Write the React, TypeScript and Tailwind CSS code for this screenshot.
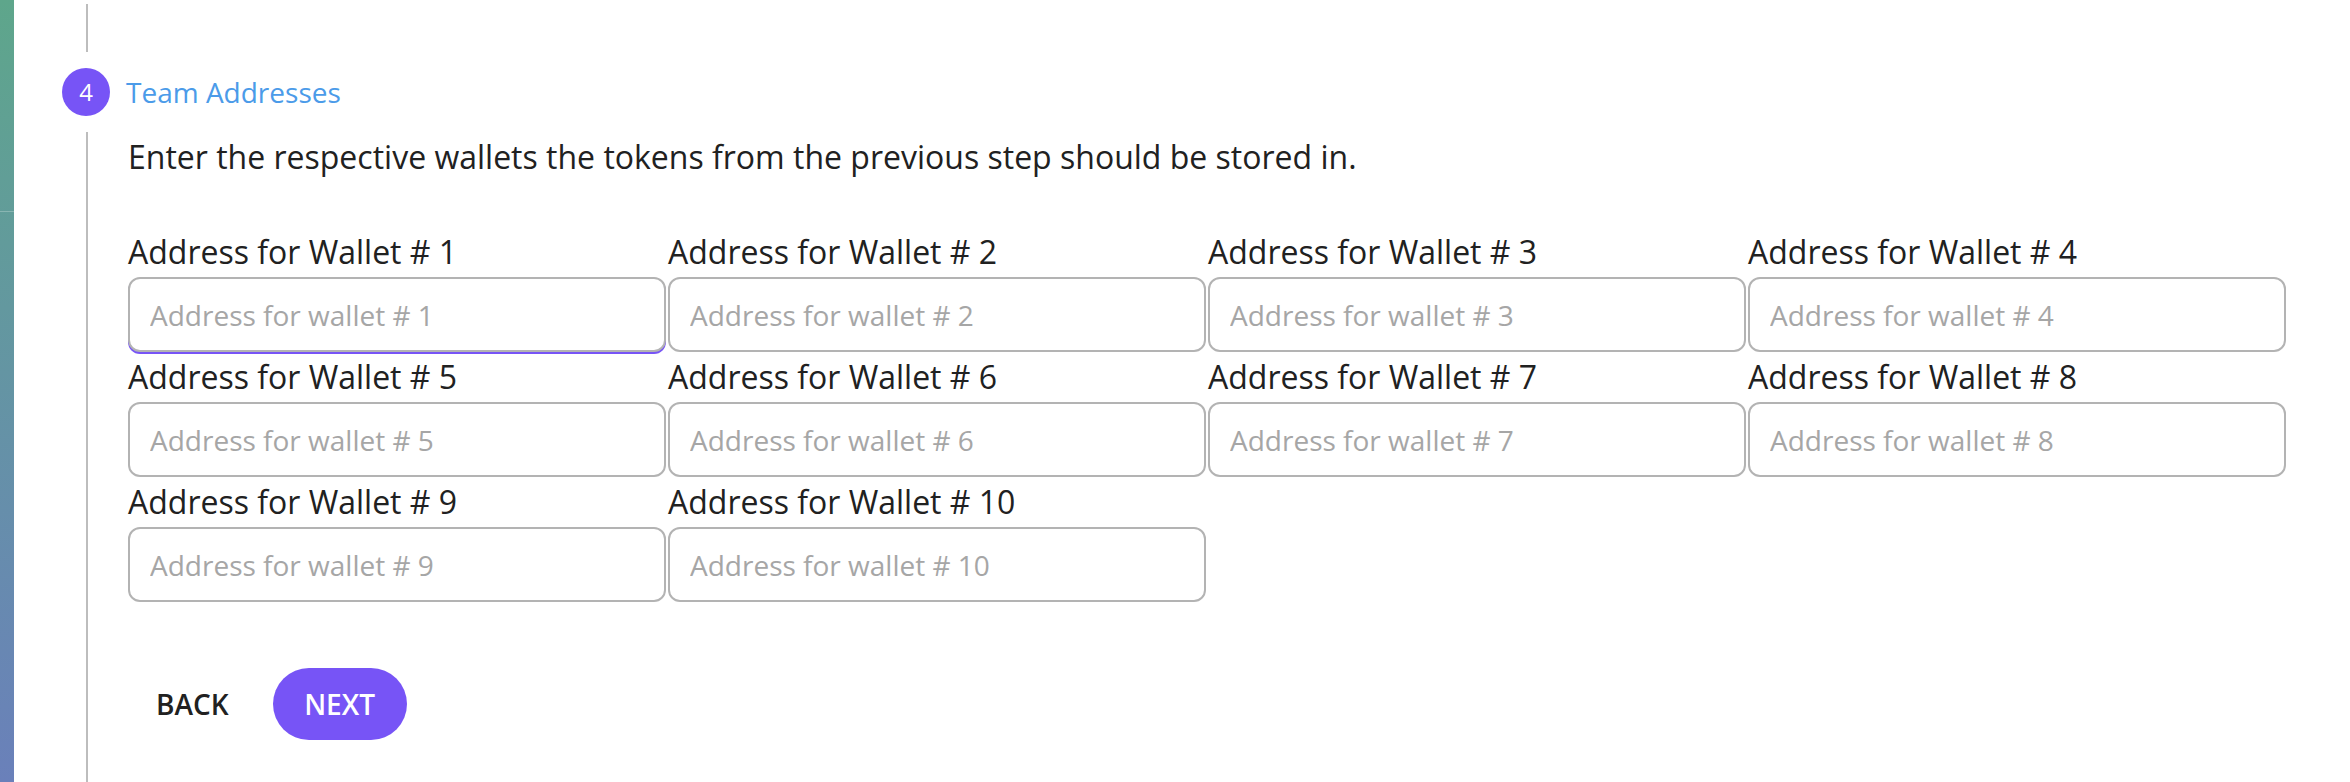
import React from 'react';

const WALLETS = Array.from({ length: 10 }, (_, i) => i + 1);

function WalletField({ n }: { n: number }) {
  return (
    <div className="flex flex-col">
      <label className="h-[50px] text-[32px] leading-[50px] text-[#212121]">
        Address for Wallet # {n}
      </label>
      <input
        type="text"
        placeholder={`Address for wallet # ${n}`}
        className={
          n === 1
            ? 'h-[75px] w-full rounded-[12px] border-2 border-[#b3b3b3] bg-white px-[20px] text-[28px] text-[#212121] shadow-[0_2px_0_#7754f6] outline-none placeholder:text-[#a6a6a6]'
            : 'h-[75px] w-full rounded-[12px] border-2 border-[#b3b3b3] bg-white px-[20px] text-[28px] text-[#212121] outline-none placeholder:text-[#a6a6a6]'
        }
      />
    </div>
  );
}

export default function App() {
  return (
    <div className="flex h-[782px] w-[2350px] overflow-hidden bg-white font-['Open_Sans',sans-serif]">
      {/* side strip */}
      <div className="flex w-[14px] flex-col bg-gradient-to-b from-[#5ea68b] to-[#6a80ba]">
        <div className="h-[212px] border-b border-white/25" />
        <div className="flex-1" />
      </div>

      {/* vertical stepper */}
      <div className="ml-[48px] flex flex-1 flex-col">
        <div className="ml-[24px] mt-[4px] h-[48px] w-[2px] bg-[#bdbdbd]" />

        <div className="flex items-center py-[16px]">
          <div className="flex h-[48px] w-[48px] items-center justify-center rounded-full bg-[#7754f6] text-[24px] text-white">
            4
          </div>
          <span className="ml-[16px] text-[28px] text-[#4b9be9]">Team Addresses</span>
        </div>

        <div className="ml-[24px] flex-1 border-l-2 border-[#bdbdbd] pl-[40px]">
          <p className="text-[32px] leading-[49px] text-[#212121]">
            Enter the respective wallets the tokens from the previous step should be stored in.
          </p>

          <div className="mt-[46px] grid w-[2158px] grid-cols-4 gap-x-[2px]">
            {WALLETS.map((n) => (
              <WalletField key={n} n={n} />
            ))}
          </div>

          <div className="mt-[66px] flex items-center gap-[16px]">
            <button
              type="button"
              className="h-[72px] px-[28px] text-[28px] font-semibold uppercase text-[#212121]"
            >
              Back
            </button>
            <button
              type="button"
              className="h-[72px] w-[134px] rounded-full bg-[#7754f6] text-[28px] font-semibold uppercase text-white"
            >
              Next
            </button>
          </div>
        </div>
      </div>
    </div>
  );
}
